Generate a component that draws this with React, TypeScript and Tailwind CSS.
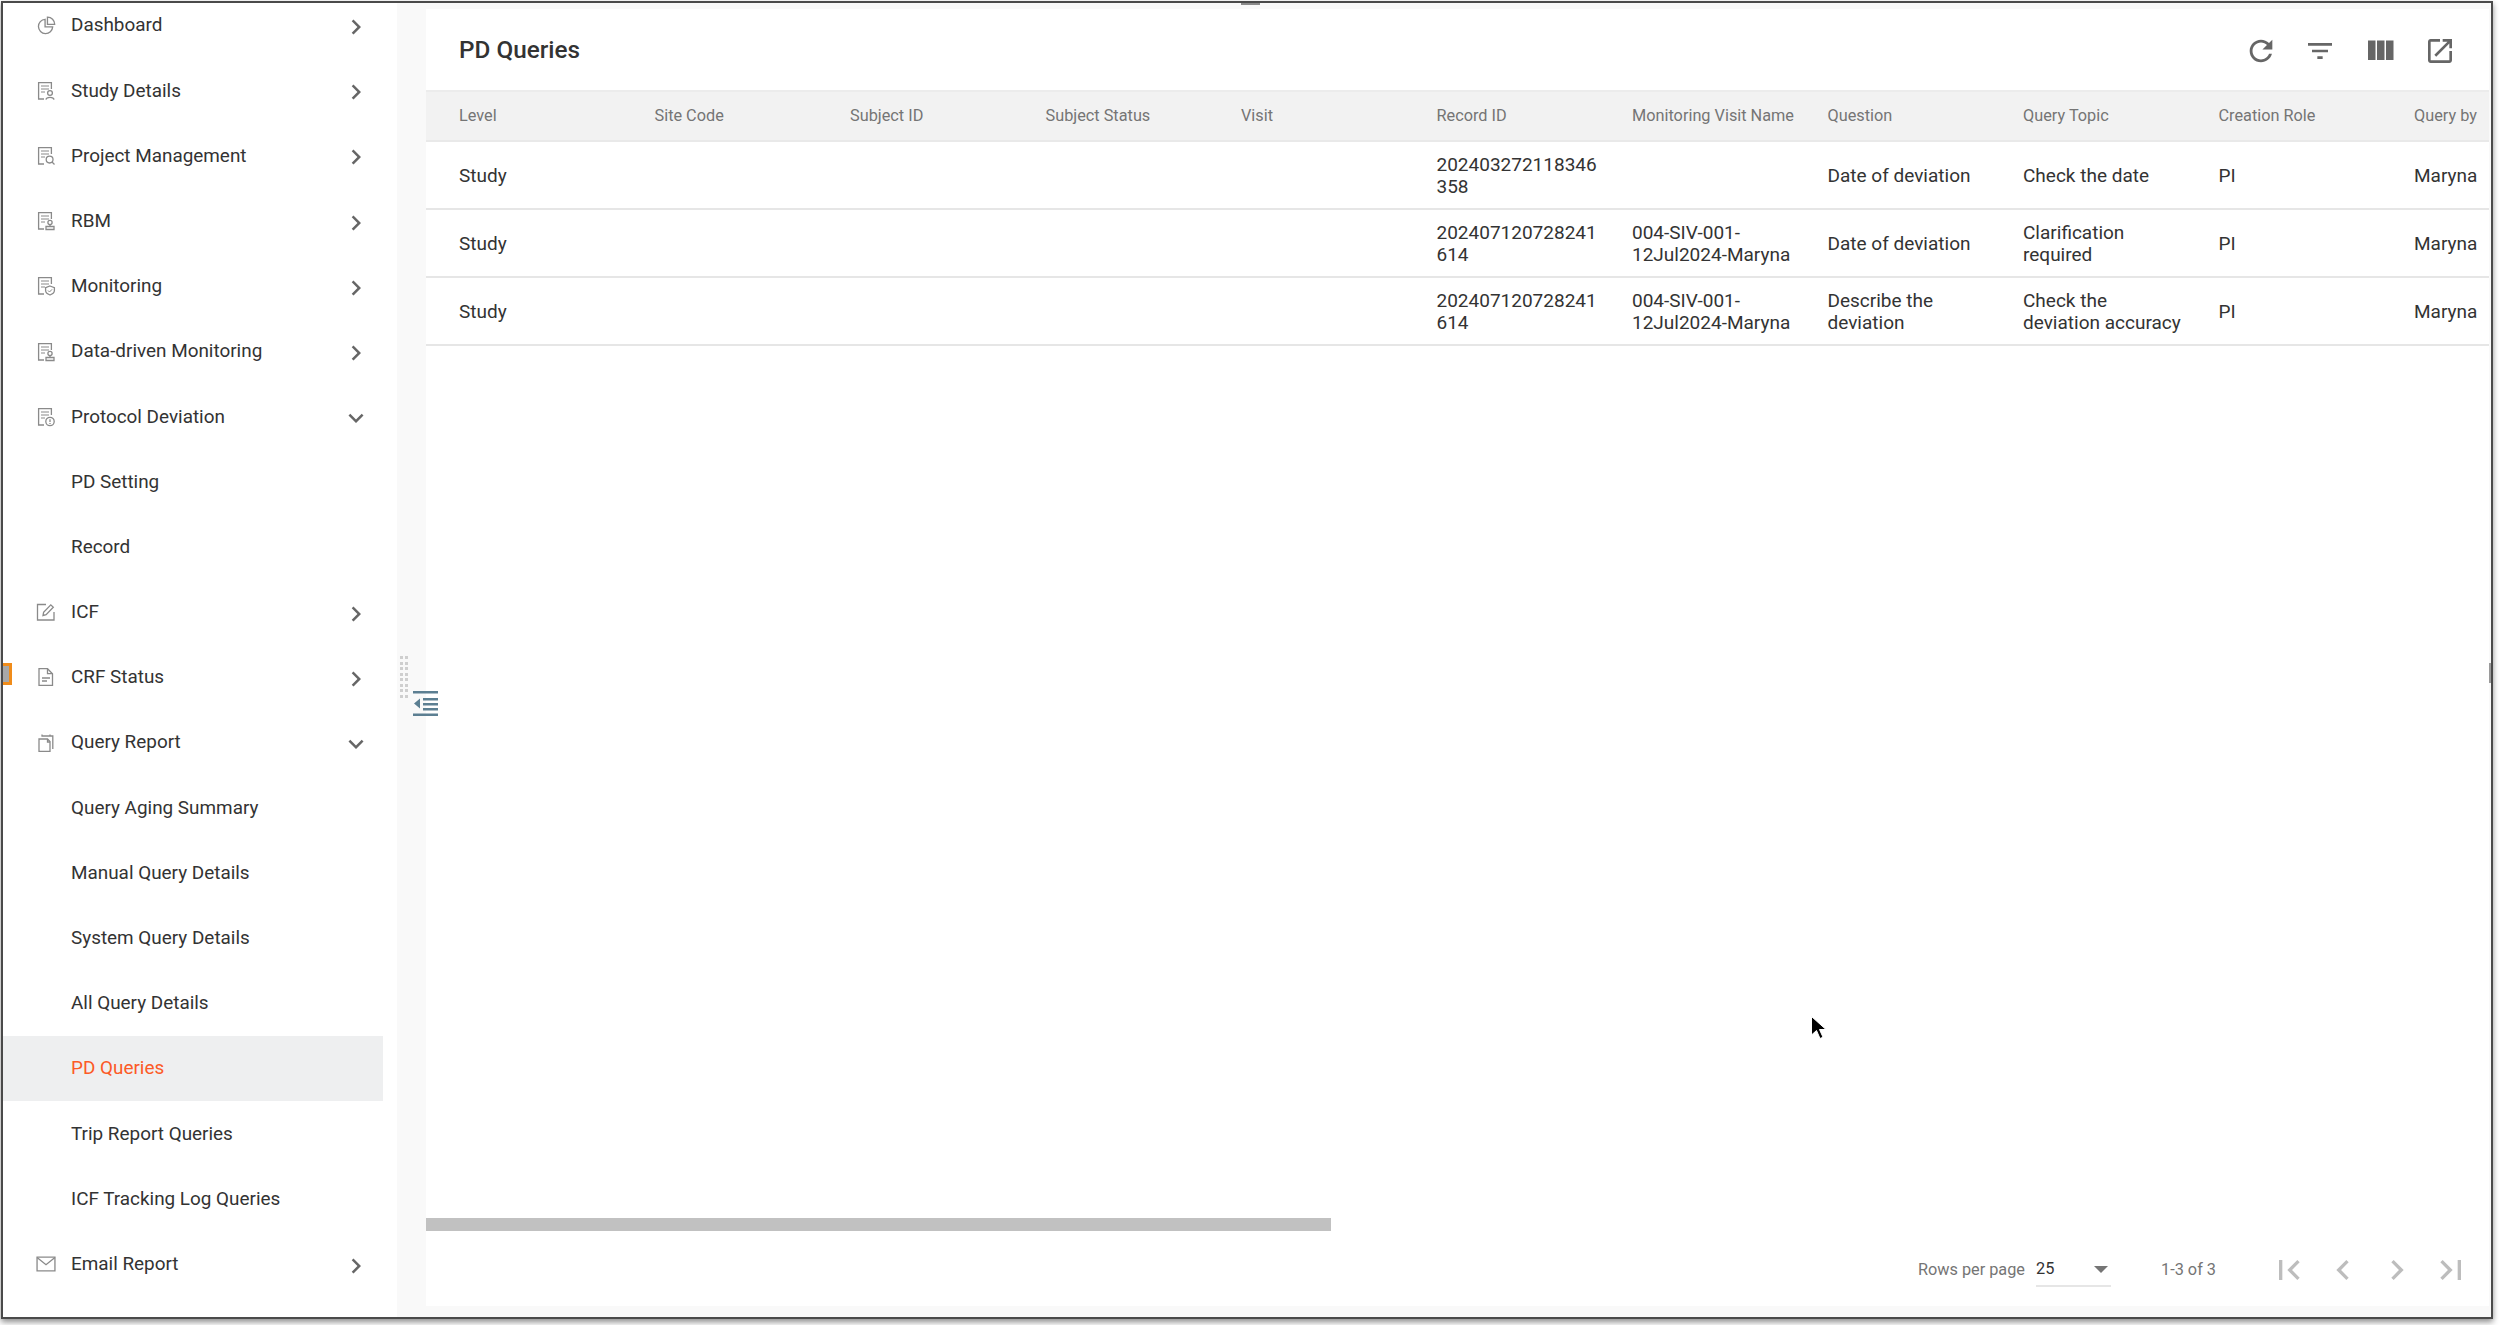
import type { ReactNode } from "react";

const font = "font-['Roboto','Liberation_Sans',sans-serif]";

// document glyph shared by most of the sidebar entries, only the corner badge changes
function DocIcon({ badge }: { badge: ReactNode }) {
  return (
    <svg width="20" height="20" viewBox="0 0 20 20" fill="none" stroke="#8a8a8a" strokeWidth="1.3">
      <path d="M8 18H2.600V1.600h12.800V8" />
      <path d="M5 5h8M5 8h8M5 11h4" strokeWidth="1.100" />
      {badge}
    </svg>
  );
}

const badges: Record<string, ReactNode> = {
  person: (
    <>
      <circle cx="14" cy="12" r="2.400" />
      <path d="M10 18.600c.4-3 7.600-3 8 0" />
    </>
  ),
  search: (
    <>
      <circle cx="13.600" cy="13.600" r="3.400" />
      <path d="M16 16l2.500 2.500" />
    </>
  ),
  stamp: (
    <>
      <circle cx="14" cy="11.500" r="2.100" />
      <path d="M14 13.600v1.600M10 15.500h8v3h-8z" />
    </>
  ),
  shield: (
    <>
      <path d="M14 10l4.400 1.600v3c0 2-2 3.600-4.400 4.400-2.400-.8-4.400-2.400-4.400-4.400v-3z" />
      <path d="M12 14.500l1.500 1.500 2.600-2.700" strokeWidth="1" />
    </>
  ),
  alert: (
    <>
      <circle cx="14" cy="14.500" r="4.200" />
      <path d="M14 12.200v2.800M14 16v.9" />
    </>
  ),
};

const iconPaths = {
  dashboard: (
    <svg width="19" height="19" viewBox="0 0 20 20" fill="none" stroke="#8a8a8a" strokeWidth="1.400">
      <path d="M8.500 3.500a7.500 7.500 0 1 0 8 8h-8z" />
      <path d="M11 1.200a7.500 7.500 0 0 1 7.600 7.600H11z" />
    </svg>
  ),
  edit: (
    <svg width="20" height="20" viewBox="0 0 20 20" fill="none" stroke="#8a8a8a" strokeWidth="1.300">
      <path d="M10 2.500H1.500v15.500h16.500V10" />
      <path d="M7 13.500l.6-3.200 7.200-7.400 2.500 2.400-7.200 7.400z" />
    </svg>
  ),
  crf: (
    <svg width="20" height="20" viewBox="0 0 20 20" fill="none" stroke="#8a8a8a" strokeWidth="1.300">
      <path d="M3 1.700h8.500l5 5V18.300H3z" />
      <path d="M11.500 1.700v5h5M6 11h8M6 14h5" />
    </svg>
  ),
  clipboard: (
    <svg width="20" height="20" viewBox="0 0 20 20" fill="none" stroke="#8a8a8a" strokeWidth="1.300">
      <path d="M6 3.500V1.500M14 3.500V1.500M5.500 3h11.300v13" />
      <path d="M3 6h8.500l2.500 2.500V18.300H3z" />
      <path d="M11.500 6v3H14" />
    </svg>
  ),
  mail: (
    <svg width="20" height="16" viewBox="0 0 21 17" fill="none" stroke="#8a8a8a" strokeWidth="1.400">
      <path d="M1 1.200h19v14.600H1z" />
      <path d="M1 1.500l9.500 7.800L20 1.500" />
    </svg>
  ),
};

type NavRow = { label: string; icon?: ReactNode; arrow?: "right" | "down"; active?: boolean };

const navRows: NavRow[] = [
  { label: "Dashboard", icon: iconPaths.dashboard, arrow: "right" },
  { label: "Study Details", icon: <DocIcon badge={badges.person} />, arrow: "right" },
  { label: "Project Management", icon: <DocIcon badge={badges.search} />, arrow: "right" },
  { label: "RBM", icon: <DocIcon badge={badges.stamp} />, arrow: "right" },
  { label: "Monitoring", icon: <DocIcon badge={badges.shield} />, arrow: "right" },
  { label: "Data-driven Monitoring", icon: <DocIcon badge={badges.stamp} />, arrow: "right" },
  { label: "Protocol Deviation", icon: <DocIcon badge={badges.alert} />, arrow: "down" },
  { label: "PD Setting" },
  { label: "Record" },
  { label: "ICF", icon: iconPaths.edit, arrow: "right" },
  { label: "CRF Status", icon: iconPaths.crf, arrow: "right" },
  { label: "Query Report", icon: iconPaths.clipboard, arrow: "down" },
  { label: "Query Aging Summary" },
  { label: "Manual Query Details" },
  { label: "System Query Details" },
  { label: "All Query Details" },
  { label: "PD Queries", active: true },
  { label: "Trip Report Queries" },
  { label: "ICF Tracking Log Queries" },
  { label: "Email Report", icon: iconPaths.mail, arrow: "right" },
];

const columns = [
  "Level",
  "Site Code",
  "Subject ID",
  "Subject Status",
  "Visit",
  "Record ID",
  "Monitoring Visit Name",
  "Question",
  "Query Topic",
  "Creation Role",
  "Query by",
];

const tableRows = [
  ["Study", "", "", "", "", "202403272118346358", "", "Date of deviation", "Check the date", "PI", "Maryna"],
  ["Study", "", "", "", "", "202407120728241614", "004-SIV-001-12Jul2024-Maryna", "Date of deviation", "Clarification required", "PI", "Maryna"],
  ["Study", "", "", "", "", "202407120728241614", "004-SIV-001-12Jul2024-Maryna", "Describe the deviation", "Check the deviation accuracy", "PI", "Maryna"],
];

function MaterialIcon({ d, size, color }: { d: string; size: number; color: string }) {
  return (
    <svg width={size} height={size} viewBox="0 0 24 24" fill={color}>
      <path d={d} />
    </svg>
  );
}

const CHEVRON_RIGHT = "M10 6L8.590 7.410 13.170 12l-4.580 4.590L10 18l6-6z";
const CHEVRON_LEFT = "M15.410 7.410L14 6l-6 6 6 6 1.410-1.410L10.830 12z";
const CHEVRON_DOWN = "M16.590 8.590L12 13.170 7.410 8.590 6 10l6 6 6-6z";

function Sidebar() {
  return (
    <div className="w-[394px] h-full shrink-0 overflow-hidden bg-white">
      <div className="-mt-[10px]">
        {navRows.map((row) => (
          <div
            key={row.label}
            className={`flex items-center h-[65.2px] w-[380px] ${row.active ? "bg-[#eeeff0]" : ""}`}
          >
            <div className="w-[68px] shrink-0 flex justify-center pl-[18px]">{row.icon}</div>
            <span className={`flex-1 text-[18.9px] ${row.active ? "text-[#fc5a26]" : "text-[#333]"}`}>
              {row.label}
            </span>
            {row.arrow && (
              <div className="w-[32px] mr-[11px] pt-[3px] flex justify-center">
                <MaterialIcon
                  d={row.arrow === "right" ? CHEVRON_RIGHT : CHEVRON_DOWN}
                  size={30}
                  color="#666"
                />
              </div>
            )}
          </div>
        ))}
      </div>
    </div>
  );
}

function Toolbar() {
  return (
    <div className="flex items-center justify-between h-[83px] shrink-0 pl-[33px] pr-[33px] border-b-2 border-[#ececec]">
      <h1 className="text-[24.3px] pt-[1px] text-[#333] font-medium">PD Queries</h1>
      <div className="flex items-center gap-[26px] pt-[2px]">
        <MaterialIcon
          size={34}
          color="#666"
          d="M17.650 6.350C16.200 4.900 14.210 4 12 4c-4.420 0-7.990 3.580-7.990 8s3.570 8 7.990 8c3.730 0 6.840-2.550 7.730-6h-2.080c-.82 2.330-3.040 4-5.650 4-3.310 0-6-2.690-6-6s2.690-6 6-6c1.660 0 3.140.69 4.220 1.780L13 11h7V4l-2.350 2.350z"
        />
        <MaterialIcon size={32} color="#666" d="M10 18h4v-2h-4v2zM3 6v2h18V6H3zm3 7h12v-2H6v2z" />
        <MaterialIcon size={36} color="#666" d="M10 18h5V5h-5v13zm-6 0h5V5H4v13zM16 5v13h5V5h-5z" />
        <MaterialIcon
          size={32}
          color="#666"
          d="M19 19H5V5h7V3H5c-1.110 0-2 .9-2 2v14c0 1.100.89 2 2 2h14c1.100 0 2-.9 2-2v-7h-2v7zM14 3v2h3.590l-9.830 9.830 1.410 1.410L19 6.410V10h2V3h-7z"
        />
      </div>
    </div>
  );
}

function QueryTable() {
  return (
    <div className="flex-1 min-h-0 overflow-hidden">
      <div className="grid grid-cols-[repeat(11,195.5px)] h-[50px] pt-[1px] items-center bg-[#f2f2f2] border-b-2 border-[#e9e9e9] text-[16.3px] text-[#757575]">
        {columns.map((col) => (
          <div key={col} className="pl-[33px] whitespace-nowrap">
            {col}
          </div>
        ))}
      </div>
      {tableRows.map((row, i) => (
        <div
          key={i}
          className="grid grid-cols-[repeat(11,195.5px)] h-[68px] pt-[2px] items-center border-b-2 border-[#e6e6e6] text-[19px] leading-[22px] text-[#333]"
        >
          {row.map((cell, j) => (
            <div key={j} className="pl-[33px] break-words">
              {cell}
            </div>
          ))}
        </div>
      ))}
    </div>
  );
}

function Pager() {
  return (
    <div className="h-[75px] pt-[3px] shrink-0 flex items-center justify-end pr-[18px] text-[16.3px] text-[#757575]">
      <span className="mr-[11px]">Rows per page</span>
      <div className="w-[75px] h-[30px] mt-[3px] flex items-center justify-between border-b-2 border-[#e6e6e6] pb-[2px] text-[#333] mr-[50px]">
        <span>25</span>
        <span className="mr-[3px] w-0 h-0 border-x-[7px] border-x-transparent border-t-[7px] border-t-[#757575]" />
      </div>
      <span className="mr-[53px]">1-3 of 3</span>
      <div className="flex items-center gap-[14px]">
        <MaterialIcon size={40} color="#bdbdbd" d="M18.410 16.590L13.820 12l4.590-4.590L17 6l-6 6 6 6zM6 6h2v12H6z" />
        <MaterialIcon size={40} color="#bdbdbd" d={CHEVRON_LEFT} />
        <MaterialIcon size={40} color="#bdbdbd" d={CHEVRON_RIGHT} />
        <MaterialIcon size={40} color="#bdbdbd" d="M5.590 7.410L10.180 12l-4.590 4.590L7 18l6-6-6-6zM16 6h2v12h-2z" />
      </div>
    </div>
  );
}

export default function App() {
  return (
    <div className={`${font} w-[2500px] h-[1325px] overflow-hidden bg-white`}>
      <div className="relative ml-[1px] mt-[1px] w-[2492px] h-[1318px] border-2 border-[#4a4a4a] shadow-[0_3px_6px_rgba(0,0,0,0.45)] flex overflow-hidden bg-[#f9f9f9]">
        <Sidebar />
        <div className="w-[29px] shrink-0" />
        <div className="flex-1 min-w-0 mt-[6px] mb-[11px] mr-[2px] bg-white flex flex-col">
          <Toolbar />
          <QueryTable />
          {/* horizontal scrollbar thumb */}
          <div className="h-[13px] w-[905px] shrink-0 bg-[#c1c1c1]" />
          <Pager />
        </div>

        {/* sidebar resize grip */}
        <div className="absolute left-[397px] top-[653px] grid grid-cols-2 gap-x-[2px] gap-y-[2.500px]">
          {Array.from({ length: 16 }).map((_, i) => (
            <span key={i} className="w-[3px] h-[3px] bg-[#cfcfcf]" />
          ))}
        </div>
        {/* collapse toggle */}
        <svg className="absolute left-[409px] top-[687px]" width="27" height="27" viewBox="0 0 27 27" fill="#5c7f92">
          <path d="M1 1h25v2.500H1zM11 8h15v2.500H11zM11 13h15v2.500H11zM11 18h15v2.500H11zM1 23.500h25V26H1zM8 8.500v10l-6-5z" />
        </svg>
        {/* small capture artefacts on the window edge */}
        <div className="absolute left-0 top-[660px] w-[9px] h-[22px] bg-[#a8a8a8] border-y-[3px] border-r-[3px] border-[#f08c1a]" />
        <div className="absolute right-0 top-[660px] w-[2px] h-[20px] bg-[#9a9a9a]" />
        <div className="absolute left-[1238px] top-0 w-[19px] h-[2px] bg-[#8a8a8a]" />
        {/* mouse pointer */}
        <svg className="absolute left-[1807px] top-[1012px]" width="18" height="26" viewBox="0 0 18 26">
          <path d="M1.500 1.500v18.500l5-4.500 3.500 8 3-1.300-3.500-7.700h6.500z" fill="#000" stroke="#fff" strokeWidth="1" />
        </svg>
      </div>
    </div>
  );
}
